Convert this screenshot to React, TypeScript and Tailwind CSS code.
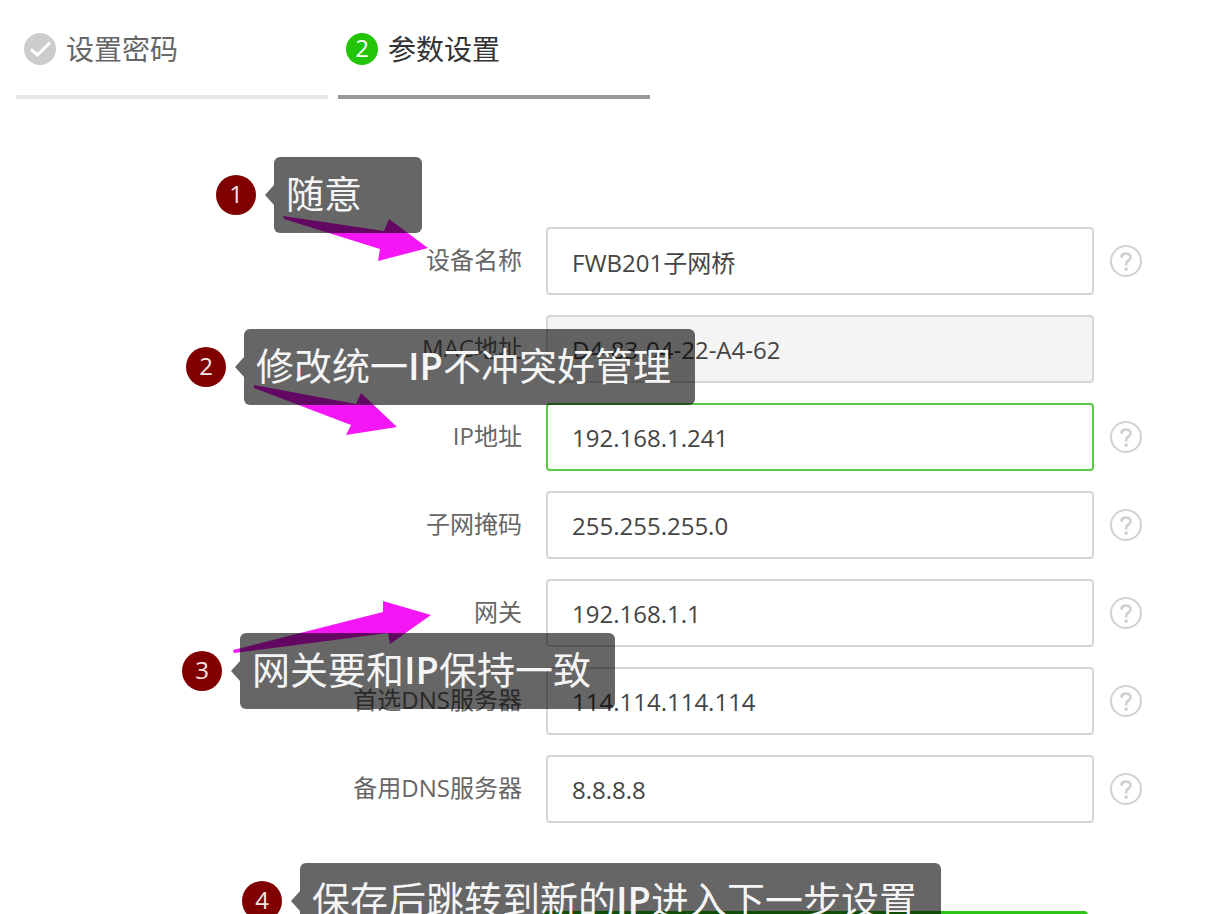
import type { ReactNode } from "react";

type Arrow = { box: string; viewBox: string; points: string };

type CalloutProps = {
  number: number;
  place: string;
  children: ReactNode;
};

function Callout({ number, place, children }: CalloutProps) {
  return (
    <div className={`absolute z-20 flex items-center ${place}`}>
      <span className="flex size-10 items-center justify-center rounded-full bg-[#800000] pb-0.5 text-2xl leading-none text-[#f4e6e6]">
        {number}
      </span>
      <svg className="ml-2 h-5 w-2.5" viewBox="0 0 10 20" aria-hidden="true">
        <path d="M10 0 L1 10 L10 20 Z" fill="#000" fillOpacity="0.6" />
      </svg>
      <p className="h-[76px] min-w-[148px] rounded-md bg-black/60 pr-6 pl-3 text-[38px] leading-[72px] whitespace-nowrap text-[#f5f5f5]">
        {children}
      </p>
    </div>
  );
}

function ArrowMark({ box, viewBox, points }: Arrow) {
  return (
    <svg className={`absolute z-10 ${box}`} viewBox={viewBox} aria-hidden="true">
      <polygon points={points} fill="#f516f5" />
    </svg>
  );
}

function HelpIcon() {
  return (
    <svg className="size-8" viewBox="0 0 32 32" fill="none" stroke="#d2d2d2" aria-hidden="true">
      <circle cx="16" cy="16" r="15" strokeWidth="2" />
      <path d="M11.4 12.6 C11.5 9.9 13.4 8.7 16 8.7 C18.7 8.7 20.5 10.2 20.5 12.4 C20.5 15.4 16.2 15.6 16.2 19.2 V20.4" strokeWidth="2.8" />
      <circle cx="16.2" cy="24.1" r="1.8" fill="#d2d2d2" stroke="none" />
    </svg>
  );
}

type FieldProps = {
  id: string;
  label: string;
  value: string;
  tone?: string;
  readOnly?: boolean;
  help?: boolean;
  children?: ReactNode;
};

function Field({
  id,
  label,
  value,
  tone = "border-[#d6d6d6] bg-white",
  readOnly = false,
  help = true,
  children,
}: FieldProps) {
  return (
    <div className="relative flex items-center pr-[83px]">
      <label htmlFor={id} className="w-[522px] shrink-0 pb-0.5 text-right text-2xl text-[#666]">
        {label}
      </label>
      <input
        id={id}
        type="text"
        defaultValue={value}
        readOnly={readOnly}
        className={`ml-6 h-[68px] min-w-0 flex-1 rounded border-2 px-6 text-2xl text-[#444] outline-none ${tone}`}
      />
      <div className="ml-4 size-8 shrink-0">
        {help && (
          <button type="button" aria-label={`${label}帮助`} className="block size-8">
            <HelpIcon />
          </button>
        )}
      </div>
      {children}
    </div>
  );
}

export default function App() {
  return (
    <main className="h-screen overflow-hidden bg-white font-['Open_Sans','Noto_Sans_CJK_SC',sans-serif]">
      <ol className="flex gap-2.5 px-4 text-[28px]">
        <li className="flex h-[99px] w-[312px] items-center gap-2.5 border-b-4 border-[#e6e6e6] pt-0.5 pl-2 text-[#666]">
          <svg className="size-8" viewBox="0 0 32 32" aria-hidden="true">
            <circle cx="16" cy="16" r="16" fill="#ccc" />
            <path d="M7 16.5 L13.5 22 L26 9.5" fill="none" stroke="#fff" strokeWidth="3" />
          </svg>
          <span>设置密码</span>
        </li>
        <li
          aria-current="step"
          className="flex h-[99px] w-[312px] items-center gap-2.5 border-b-4 border-[#999] pt-0.5 pl-2 text-[#333]"
        >
          <span className="flex size-8 items-center justify-center rounded-full bg-[#22c507] pb-0.5 text-2xl leading-none text-white">
            2
          </span>
          <span>参数设置</span>
        </li>
      </ol>

      <form className="flex flex-col gap-5 pt-32" onSubmit={(event) => event.preventDefault()}>
        <Field id="device-name" label="设备名称" value="FWB201子网桥">
          <ArrowMark
            box="-top-3 left-[280px] h-12 w-[150px]"
            viewBox="280 215 150 48"
            points="283,216 384,231 389,219 428,248 378,261 380,249 284,219"
          />
          <Callout number={1} place="-top-[70px] left-[216px]">
            随意
          </Callout>
        </Field>
        <Field
          id="mac"
          label="MAC地址"
          value="D4-83-04-22-A4-62"
          tone="border-[#d6d6d6] bg-[#f4f4f4]"
          readOnly
          help={false}
        />
        <Field id="ip" label="IP地址" value="192.168.1.241" tone="border-[#57cb44] bg-white">
          <ArrowMark
            box="-top-5 left-[250px] h-14 w-[150px]"
            viewBox="250 383 150 56"
            points="254,385 356,404 361,393 397,427 346,435 351,425 254,388"
          />
          <Callout number={2} place="-top-[74px] left-[186px]">
            修改统一<span className="font-semibold">IP</span>不冲突好管理
          </Callout>
        </Field>
        <Field id="mask" label="子网掩码" value="255.255.255.0" />
        <Field id="gateway" label="网关" value="192.168.1.1">
          <ArrowMark
            box="top-5 left-[230px] h-14 w-[204px]"
            viewBox="230 599 204 56"
            points="233,650 383,612 383,601 431,615 390,644 388,633 234,653"
          />
          <Callout number={3} place="top-[54px] left-[182px]">
            网关要和<span className="font-semibold">IP</span>保持一致
          </Callout>
        </Field>
        <Field id="dns-primary" label="首选DNS服务器" value="114.114.114.114" />
        <Field id="dns-secondary" label="备用DNS服务器" value="8.8.8.8" />

        <div className="relative flex pt-[68px] pr-[137px] pl-[544px]">
          <button type="submit" aria-label="下一步" className="h-[68px] flex-1 rounded bg-[#2cc415]" />
          <Callout number={4} place="top-5 left-[242px]">
            保存后跳转到新的<span className="font-semibold">IP</span>进入下一步设置
          </Callout>
        </div>
      </form>
    </main>
  );
}
